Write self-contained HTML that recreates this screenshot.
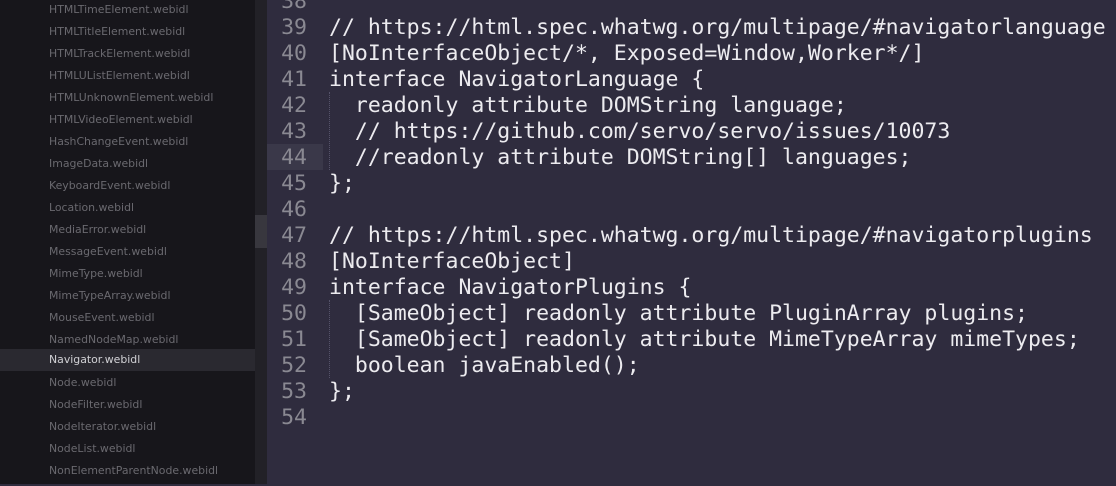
<html><head><style>
body{margin:0;width:1116px;height:484px;overflow:hidden;background:#2f2c3e;position:relative;font-family:"Liberation Sans",sans-serif}
#side{position:absolute;left:0;top:0;width:255px;height:484px;background:#17161b}
#side div{position:absolute;left:0;width:255px;height:22px;line-height:22px;font-size:10.9px;font-family:"DejaVu Sans",sans-serif;color:#6a696f;padding-left:49px;box-sizing:border-box}
#side div.sel{background:#2a2930;color:#d0d0d4}
#sb{position:absolute;left:255px;top:0;width:12px;height:484px;background:#222127}
#thumb{position:absolute;left:255px;top:215px;width:12px;height:33px;background:#38373e}
#hl{position:absolute;left:267px;top:144px;width:56px;height:26px;background:#3a3849}
#c{position:absolute;left:0;top:2px;width:1116px;height:484px}
.ln{position:absolute;left:267px;width:40px;text-align:right;font-family:"DejaVu Sans Mono",monospace;font-size:21.5px;color:#8a8992;line-height:26px}
.cd{position:absolute;left:329px;font-family:"DejaVu Sans Mono",monospace;font-size:21.5px;color:#ecebef;line-height:26px;white-space:pre}
.g{position:absolute;left:329px;width:0;border-left:1px dotted #55536a}
</style></head><body>
<div id="side">
<div style="top:-1px">HTMLTimeElement.webidl</div>
<div style="top:21px">HTMLTitleElement.webidl</div>
<div style="top:43px">HTMLTrackElement.webidl</div>
<div style="top:65px">HTMLUListElement.webidl</div>
<div style="top:87px">HTMLUnknownElement.webidl</div>
<div style="top:109px">HTMLVideoElement.webidl</div>
<div style="top:131px">HashChangeEvent.webidl</div>
<div style="top:153px">ImageData.webidl</div>
<div style="top:175px">KeyboardEvent.webidl</div>
<div style="top:197px">Location.webidl</div>
<div style="top:219px">MediaError.webidl</div>
<div style="top:241px">MessageEvent.webidl</div>
<div style="top:263px">MimeType.webidl</div>
<div style="top:285px">MimeTypeArray.webidl</div>
<div style="top:307px">MouseEvent.webidl</div>
<div style="top:329px">NamedNodeMap.webidl</div>
<div class="sel" style="top:349px">Navigator.webidl</div>
<div style="top:372px">Node.webidl</div>
<div style="top:394px">NodeFilter.webidl</div>
<div style="top:416px">NodeIterator.webidl</div>
<div style="top:438px">NodeList.webidl</div>
<div style="top:460px">NonElementParentNode.webidl</div>
</div>
<div id="sb"></div><div id="thumb"></div>
<div id="hl"></div>
<div id="c">
<div class="g" style="top:90px;height:78px"></div>
<div class="g" style="top:298px;height:78px"></div>
<div class="ln" style="top:-13px">38</div>
<div class="ln" style="top:13px">39</div>
<div class="ln" style="top:39px">40</div>
<div class="ln" style="top:65px">41</div>
<div class="ln" style="top:91px">42</div>
<div class="ln" style="top:117px">43</div>
<div class="ln" style="top:143px">44</div>
<div class="ln" style="top:169px">45</div>
<div class="ln" style="top:195px">46</div>
<div class="ln" style="top:221px">47</div>
<div class="ln" style="top:247px">48</div>
<div class="ln" style="top:273px">49</div>
<div class="ln" style="top:299px">50</div>
<div class="ln" style="top:325px">51</div>
<div class="ln" style="top:351px">52</div>
<div class="ln" style="top:377px">53</div>
<div class="ln" style="top:403px">54</div>
<div class="cd" style="top:13px">// https://html.spec.whatwg.org/multipage/#navigatorlanguage</div>
<div class="cd" style="top:39px">[NoInterfaceObject/*, Exposed=Window,Worker*/]</div>
<div class="cd" style="top:65px">interface NavigatorLanguage {</div>
<div class="cd" style="top:91px">  readonly attribute DOMString language;</div>
<div class="cd" style="top:117px">  // https://github.com/servo/servo/issues/10073</div>
<div class="cd" style="top:143px">  //readonly attribute DOMString[] languages;</div>
<div class="cd" style="top:169px">};</div>
<div class="cd" style="top:221px">// https://html.spec.whatwg.org/multipage/#navigatorplugins</div>
<div class="cd" style="top:247px">[NoInterfaceObject]</div>
<div class="cd" style="top:273px">interface NavigatorPlugins {</div>
<div class="cd" style="top:299px">  [SameObject] readonly attribute PluginArray plugins;</div>
<div class="cd" style="top:325px">  [SameObject] readonly attribute MimeTypeArray mimeTypes;</div>
<div class="cd" style="top:351px">  boolean javaEnabled();</div>
<div class="cd" style="top:377px">};</div>
</div>
</body></html>
